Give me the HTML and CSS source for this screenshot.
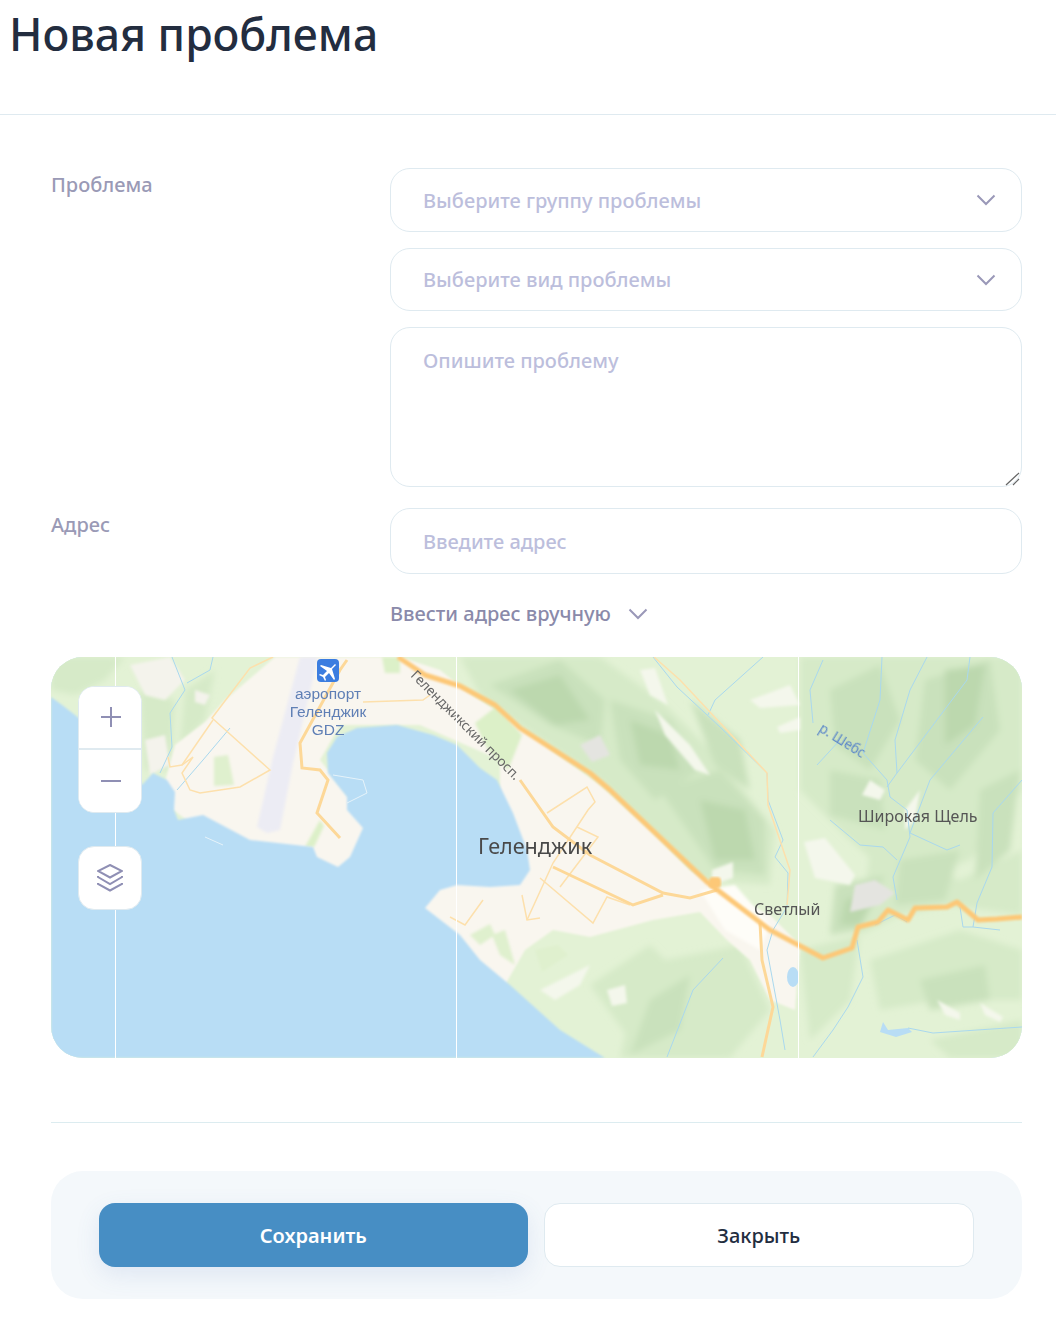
FILE: index.html
```html
<!DOCTYPE html>
<html lang="ru">
<head>
    <meta charset="UTF-8">
    <meta name="viewport" content="width=device-width, initial-scale=1.0">
    <title>Новая проблема</title>
    <link rel="stylesheet" href="styles.css">
</head>
<body>
    <header class="page-header">
        <h1>Новая проблема</h1>
    </header>

    <form class="problem-form">
        <div class="form-row">
            <label class="form-label">Проблема</label>
            <div class="form-controls">
                <div class="select-wrap select-first">
                    <select class="field">
                        <option>Выберите группу проблемы</option>
                    </select>
                    <svg class="chevron" width="20" height="12" viewBox="0 0 20 12"><path d="M1.5 1.5 L10 10 L18.5 1.5"/></svg>
                </div>
                <div class="select-wrap select-second">
                    <select class="field">
                        <option>Выберите вид проблемы</option>
                    </select>
                    <svg class="chevron" width="20" height="12" viewBox="0 0 20 12"><path d="M1.5 1.5 L10 10 L18.5 1.5"/></svg>
                </div>
                <div class="area-wrap">
                    <textarea class="field field-area" placeholder="Опишите проблему"></textarea>
                    <svg class="resizer" width="15" height="14" viewBox="0 0 15 14"><path d="M1 13 L14 1 M8 13 L14 7"/></svg>
                </div>
            </div>
        </div>

        <div class="form-row form-row-address">
            <label class="form-label">Адрес</label>
            <div class="form-controls">
                <input class="field field-address" type="text" placeholder="Введите адрес">
                <div class="manual-toggle">
                    <span>Ввести адрес вручную</span>
                    <svg class="chevron-inline" width="20" height="12" viewBox="0 0 20 12"><path d="M1.5 1.5 L10 10 L18.5 1.5"/></svg>
                </div>
            </div>
        </div>

        <div class="map">
            <svg class="map-canvas" viewBox="51 657 971 401" width="971" height="401">
                <defs>
                    <filter id="soft" x="-5%" y="-5%" width="110%" height="110%"><feGaussianBlur stdDeviation="3"/></filter>
                    <filter id="mid" x="-5%" y="-5%" width="110%" height="110%"><feGaussianBlur stdDeviation="1.6"/></filter>
                    <filter id="softer" x="-5%" y="-5%" width="110%" height="110%"><feGaussianBlur stdDeviation="0.9"/></filter>
                    <filter id="textblur"><feGaussianBlur stdDeviation="0.35"/></filter>
                </defs>

                <!-- land -->
                <rect x="51" y="657" width="971" height="401" fill="#e3f2d5"/>
                <g filter="url(#soft)">
                    <g fill="#d6eac8">
                        <polygon points="460,657 600,657 660,700 720,760 775,830 770,885 700,880 650,830 600,780 520,725 480,695"/>
                        <polygon points="800,657 1022,657 1022,790 970,860 900,885 850,840 800,790"/>
                        <polygon points="870,850 960,880 1022,850 1022,915 950,905 900,915 860,935"/>
                        <polygon points="640,965 740,945 770,1010 730,1058 620,1058"/>
                        <polygon points="870,960 960,930 1022,950 1022,1000 940,1000 880,1010"/>
                        <polygon points="590,985 650,945 690,985 630,1040"/>
                        <polygon points="51,657 125,657 105,680 75,695 51,690"/>
                        <polygon points="140,690 175,700 170,770 145,770"/>
                        <polygon points="185,690 215,670 205,720 180,745"/>
                        <polygon points="800,950 860,935 850,1000 810,1040"/>
                        <polygon points="930,1040 1022,1020 1022,1058 950,1058"/>
                    </g>
                    <g fill="#c9e1bc">
                        <polygon points="490,685 560,660 605,700 600,745 550,725"/>
                        <polygon points="610,700 670,720 700,770 655,800 620,760"/>
                        <polygon points="660,790 720,770 765,820 765,875 715,870"/>
                        <polygon points="690,700 740,740 750,790 715,765"/>
                        <polygon points="830,690 880,665 900,720 870,770 835,745"/>
                        <polygon points="925,680 990,660 1000,730 950,790 915,760"/>
                        <polygon points="980,790 1020,770 1010,850 975,880"/>
                        <polygon points="835,885 885,875 860,930 830,935"/>
                        <polygon points="900,860 960,850 945,900 895,905"/>
                        <polygon points="650,1000 690,975 680,1030 630,1055"/>
                        <polygon points="920,980 985,965 990,1000 930,1010"/>
                        <polygon points="830,770 880,780 885,830 830,815"/>
                    </g>
                    <g fill="#bcd8ae">
                        <polygon points="510,690 560,675 590,720 555,725"/>
                        <polygon points="700,800 745,810 755,860 715,860"/>
                        <polygon points="630,720 670,735 680,770 640,765"/>
                        <polygon points="845,900 880,890 860,925 840,925"/>
                        <polygon points="945,670 985,665 975,725 945,745"/>
                    </g>
                </g>
                <g filter="url(#mid)">
                    <g fill="#f4f7ec">
                        <polygon points="640,670 655,668 668,705 650,695"/>
                        <polygon points="750,700 790,685 800,705 760,708"/>
                        <polygon points="777,727 800,717 800,730 780,733"/>
                        <polygon points="804,842 825,838 855,875 850,885 815,878"/>
                        <polygon points="607,990 625,985 627,1003 612,1006"/>
                        <polygon points="937,1000 960,1013 960,1020 945,1015"/>
                        <polygon points="980,1003 1003,1017 1000,1022 985,1015"/>
                        <polygon points="712,870 733,862 733,878 712,885"/>
                        <polygon points="540,990 590,965 580,985 555,1000"/>
                        <polygon points="905,810 920,790 915,820 905,830"/>
                        <polygon points="870,780 885,790 880,800 862,795"/>
                        <polygon points="655,710 690,745 710,775 695,770 665,735"/>
                    </g>
                    <g fill="#f4f3ec">
                        <polygon points="130,665 170,657 185,680 165,700 145,695"/>
                        <polygon points="145,740 165,735 170,765 150,775"/>
                        <polygon points="195,690 210,695 205,705 195,702"/>
                    </g>
                    <g fill="#e4e4e0">
                        <polygon points="855,885 875,880 895,893 880,905 850,912"/>
                        <polygon points="580,745 600,735 610,755 592,762"/>
                    </g>
                </g>

                <!-- town -->
                <g filter="url(#softer)">
                    <polygon fill="#f9f6ef" points="160,800 175,745 205,722 225,700 275,657 400,657 440,670 465,690 510,720 600,785 650,830 690,870 720,890 770,915 800,945 795,1010 770,1000 750,960 727,940 700,912 653,920 590,937 553,930 525,950 505,985 470,970 440,930 410,910 440,870 500,860 500,760 420,725 340,725 320,760 375,830 340,880 200,830"/>
                </g>
                <g filter="url(#mid)">
                    <polygon fill="#fefdf8" points="700,890 735,885 770,925 760,950 725,930"/>
                    <polygon fill="#dff0ce" points="214,757 228,755 234,785 214,786"/>
                    <polygon fill="#dcf0c8" points="475,723 497,706 522,735 508,770 488,750"/>
                    <polygon fill="#dcf0c8" points="382,657 400,657 400,673 385,673"/>
                    <polygon fill="#dff0ce" points="535,950 558,945 568,955 542,972"/>
                    <polygon fill="#dff0ce" points="470,935 490,924 495,935 480,945"/>
                    <polygon fill="#dff0ce" points="492,935 505,930 515,965 500,955"/>
                    <polygon fill="#dcf0c8" points="305,847 320,820 324,826 314,847"/>
                    <polygon fill="#ececf4" points="300,657 318,657 308,700 293,763 280,830 267,833 257,827 273,757"/>
                </g>

                <!-- sea -->
                <polygon filter="url(#softer)" fill="#b8ddf5" points="51,697 62,705 75,715 100,735 142,785 153,773 167,780 175,792 174,810 178,820 203,815 250,840 313,847 317,857 338,867 350,857 363,828 347,810 347,797 328,773 327,753 337,737 357,728 397,725 433,735 457,745 480,768 497,780 513,813 527,850 530,870 520,885 490,887 457,885 440,890 425,908 460,935 480,960 510,985 560,1030 605,1058 51,1058"/>
                <polygon fill="#b8ddf5" points="883,1022 888,1030 908,1028 912,1032 896,1037 880,1032"/>
                <ellipse cx="793" cy="977" rx="6" ry="10" fill="#b8ddf5"/>
                <path d="M347 803 L367 793 L363 780 L333 775 M205 837 L223 845" fill="none" stroke="#e6f3fa" stroke-width="1"/>

                <!-- rivers -->
                <g fill="none" stroke="#a9d8ee" stroke-width="1">
                    <path d="M172 657 L185 690 L170 713 L172 747 L160 773"/>
                    <path d="M213 657 L210 670 L187 683"/>
                    <path d="M230 728 L203 760 L177 790"/>
                    <path d="M653 657 L677 687 L720 727 L767 773 L768 800 L783 840 L775 857 L788 873 L787 907 L773 930 L767 950 L780 1020 L785 1050"/>
                    <path d="M763 657 L715 700 L708 715"/>
                    <path d="M823 660 L810 690 L813 723"/>
                    <path d="M840 740 L817 765"/>
                    <path d="M882 657 L880 700 L863 753 L887 780 L890 797 L907 810 L910 837 L893 877 L897 900"/>
                    <path d="M927 657 L910 690 L895 740 L897 773 L887 787"/>
                    <path d="M970 657 L967 680 L897 773"/>
                    <path d="M983 717 L930 780 L910 833 L947 850 L960 845"/>
                    <path d="M830 820 L860 845 L883 847 L897 860"/>
                    <path d="M1022 780 L993 813 L992 867 L977 903 L973 927 L1000 930"/>
                    <path d="M960 907 L963 927 L973 927"/>
                    <path d="M857 940 L863 977 L848 1007 L833 1030 L813 1057"/>
                    <path d="M723 958 L693 990 L667 1057"/>
                    <path d="M908 1028 L933 1033 L1022 1027"/>
                    <path d="M875 925 L895 915 L907 922"/>
                </g>

                <!-- side roads -->
                <g fill="none" stroke="#fde0ac" stroke-width="1.5">
                    <path d="M273 657 L250 668 L212 718 L270 770 L240 787 L200 793 L190 790 L182 773 L193 757 L182 765 L170 767 L168 757"/>
                    <path d="M213 720 L182 765"/>
                    <path d="M363 702 L423 700 L430 695"/>
                    <path d="M547 813 L587 787 L595 802 L588 810 L553 863 L527 920"/>
                    <path d="M577 827 L598 837 L560 887"/>
                    <path d="M540 878 L593 923 L607 897 L630 905"/>
                    <path d="M522 895 L527 920 L540 918"/>
                    <path d="M483 900 L465 925 L450 917"/>
                    <path d="M654 657 L680 680 L767 773 L768 805 L790 870 L787 905"/>
                </g>
                <g fill="none" stroke="#fdd898" stroke-width="3">
                    <path d="M347 660 L340 670 L300 743 L302 768 L320 770 L328 780 L317 813 L340 838"/>
                    <path d="M520 780 L553 827 L590 855 L663 893 L690 898 L717 890"/>
                    <path d="M553 867 L633 905 L663 895"/>
                    <path d="M760 923 L762 960 L773 1007 L762 1057"/>
                </g>

                <!-- main road -->
                <path filter="url(#softer)" fill="none" stroke="#fdc877" stroke-width="5" stroke-linejoin="round" d="M398 657 L425 675 L460 686 L495 705 L520 728 L590 773 L610 790 L707 882 L770 930 L823 958 L852 948 L858 927 L878 922 L888 910 L908 920 L915 908 L947 907 L957 902 L978 920 L997 919 L1022 917"/>
                <rect filter="url(#softer)" x="709" y="877" width="12" height="11" rx="4" fill="#fdc877"/>

                <!-- airport pin -->
                <rect x="317" y="659" width="22" height="23" rx="4" fill="#3b7de0"/>
                <path d="M335 664 L331 668 L321 665 L320 666 L327 671 L323 675 L320 674 L319 675 L323 677 L325 681 L326 680 L325 677 L329 673 L334 680 L335 679 L332 669 L336 665 Z" fill="#ffffff"/>

                <!-- map labels -->
                <g filter="url(#textblur)">
                    <g class="map-label map-label-air" text-anchor="middle">
                        <text x="328" y="699">аэропорт</text>
                        <text x="328" y="717">Геленджик</text>
                        <text x="328" y="735">GDZ</text>
                    </g>
                    <text class="map-label map-road" transform="translate(410 676) rotate(45)">Геленджикский просп.</text>
                    <text class="map-label map-city" x="478" y="854">Геленджик</text>
                    <text class="map-label map-village" x="858" y="822">Широкая Щель</text>
                    <text class="map-label map-village" x="754" y="915">Светлый</text>
                    <text class="map-label map-river" transform="translate(818 731) rotate(32)">р. Шебс</text>
                </g>
            </svg>

            <!-- tile seams -->
            <span class="seam seam-1"></span>
            <span class="seam seam-2"></span>
            <span class="seam seam-3"></span>

            <div class="map-controls">
                <div class="map-zoom">
                    <button class="map-btn" type="button">
                        <svg width="22" height="22" viewBox="0 0 22 22"><path d="M11 1 V21 M1 11 H21"/></svg>
                    </button>
                    <button class="map-btn" type="button">
                        <svg width="22" height="22" viewBox="0 0 22 22"><path d="M1 11 H21"/></svg>
                    </button>
                </div>
                <button class="map-btn map-btn-single" type="button">
                    <svg width="26" height="28" viewBox="0 0 26 28"><path d="M13 1 L25 7 L13 13.5 L1 7 Z M1 12 V13 L13 20 L25 13 V12 M1 19 V20 L13 26.5 L25 20 V19"/></svg>
                </button>
            </div>
        </div>

        <hr class="divider">

        <div class="form-actions">
            <button class="btn btn-primary" type="button">Сохранить</button>
            <button class="btn btn-ghost" type="button">Закрыть</button>
        </div>
    </form>
</body>
</html>
```

FILE: styles.css
```css
* {
    box-sizing: border-box;
}

body {
    margin: 0;
    background-color: #fff;
    font-family: "Noto Sans", sans-serif;
    color: #232d3f;
}

.page-header {
    height: 115px;
    padding: 5px 9px 0;
    border-bottom: 1px solid #dfeaf0;
}

.page-header h1 {
    margin: 0;
    font-size: 44.5px;
    line-height: 58px;
    font-weight: 500;
}

.problem-form {
    padding: 53px 34px 0 51px;
}

.form-row {
    display: grid;
    grid-template-columns: 339px 632px;
}

.form-row-address {
    margin-top: 21px;
}

.form-label {
    padding-top: 3px;
    font-size: 20px;
    font-weight: 500;
    line-height: 28px;
    color: #9a9ab6;
}

.form-controls {
    display: flex;
    flex-direction: column;
    gap: 16px;
}

.field {
    display: block;
    width: 100%;
    padding: 0 32px;
    background-color: #fff;
    border: 1px solid #dfeaf0;
    border-radius: 20px;
    font-family: inherit;
    font-size: 20px;
    font-weight: 500;
    color: #bcbedc;
    outline: none;
    appearance: none;
}

.field::placeholder {
    color: #bcbedc;
    opacity: 1;
}

.select-wrap,
.area-wrap {
    position: relative;
}

.select-first .field {
    height: 64px;
}

.select-second .field {
    height: 63px;
}

.field-area {
    height: 160px;
    padding-top: 19px;
    line-height: 28px;
    resize: none;
}

.resizer {
    position: absolute;
    right: 2px;
    bottom: 1px;
    pointer-events: none;
}

.resizer path {
    fill: none;
    stroke: #666;
    stroke-width: 1.2;
}

.field-address {
    height: 66px;
}

.chevron {
    position: absolute;
    top: 26px;
    right: 26px;
    pointer-events: none;
}

.chevron path,
.chevron-inline path {
    fill: none;
    stroke: #9a98b8;
    stroke-width: 2;
}

.manual-toggle {
    display: flex;
    align-items: center;
    gap: 17px;
    height: 28px;
    margin-top: 10px;
    font-size: 20px;
    font-weight: 500;
    line-height: 26px;
    color: #8a8aaa;
}

.map {
    position: relative;
    width: 971px;
    height: 401px;
    margin-top: 29px;
    border-radius: 32px;
    overflow: hidden;
    background-color: #b8ddf5;
}

.map-canvas {
    display: block;
}

.map-label {
    font-family: "Noto Sans", sans-serif;
    fill: #4a4a4a;
}

.map-label-air {
    font-family: "Liberation Sans", sans-serif;
    font-size: 15.5px;
    fill: #5f7fb5;
}

.map-road {
    font-size: 13.5px;
    fill: #666;
}

.map-city {
    font-size: 21.6px;
}

.map-village {
    font-size: 16px;
    fill: #555;
}

.map-river {
    font-size: 13.5px;
    fill: #5b87c9;
}

.seam {
    position: absolute;
    top: 0;
    bottom: 0;
    width: 1px;
    background-color: #fff;
}

.seam-1 {
    left: 64px;
}

.seam-2 {
    left: 405px;
}

.seam-3 {
    left: 747px;
}

.map-controls {
    position: absolute;
    top: 29px;
    left: 27px;
    display: flex;
    flex-direction: column;
    gap: 33px;
}

.map-zoom {
    display: flex;
    flex-direction: column;
    width: 64px;
    border: 1px solid #dfeaf0;
    border-radius: 16px;
    background-color: #fff;
    overflow: hidden;
}

.map-btn {
    display: flex;
    align-items: center;
    justify-content: center;
    width: 100%;
    height: 62px;
    padding: 0;
    border: none;
    background-color: #fff;
}

.map-zoom .map-btn {
    padding-left: 1px;
}

.map-zoom .map-btn:first-child {
    height: 63px;
    padding-bottom: 1px;
    border-bottom: 2px solid #dfeaf0;
}

.map-btn-single {
    width: 64px;
    height: 64px;
    border: 1px solid #dfeaf0;
    border-radius: 16px;
}

.map-btn path {
    fill: none;
    stroke: #8f8fb4;
    stroke-width: 2;
}

.divider {
    height: 1px;
    margin: 64px 0 48px;
    border: none;
    background-color: #dcecf0;
}

.form-actions {
    display: flex;
    gap: 16px;
    padding: 32px 48px;
    background-color: #f4f8fb;
    border-radius: 32px;
}

.btn {
    flex: 1;
    height: 64px;
    border-radius: 16px;
    font-family: inherit;
    font-size: 20px;
    cursor: pointer;
}

.btn-primary {
    border: none;
    background-color: #478ec4;
    color: #fff;
    font-weight: 600;
    box-shadow: 0 8px 24px rgba(71, 110, 180, 0.12);
}

.btn-ghost {
    border: 1px solid #dfeaf0;
    background-color: #fff;
    color: #232d3f;
    font-weight: 500;
}
```
